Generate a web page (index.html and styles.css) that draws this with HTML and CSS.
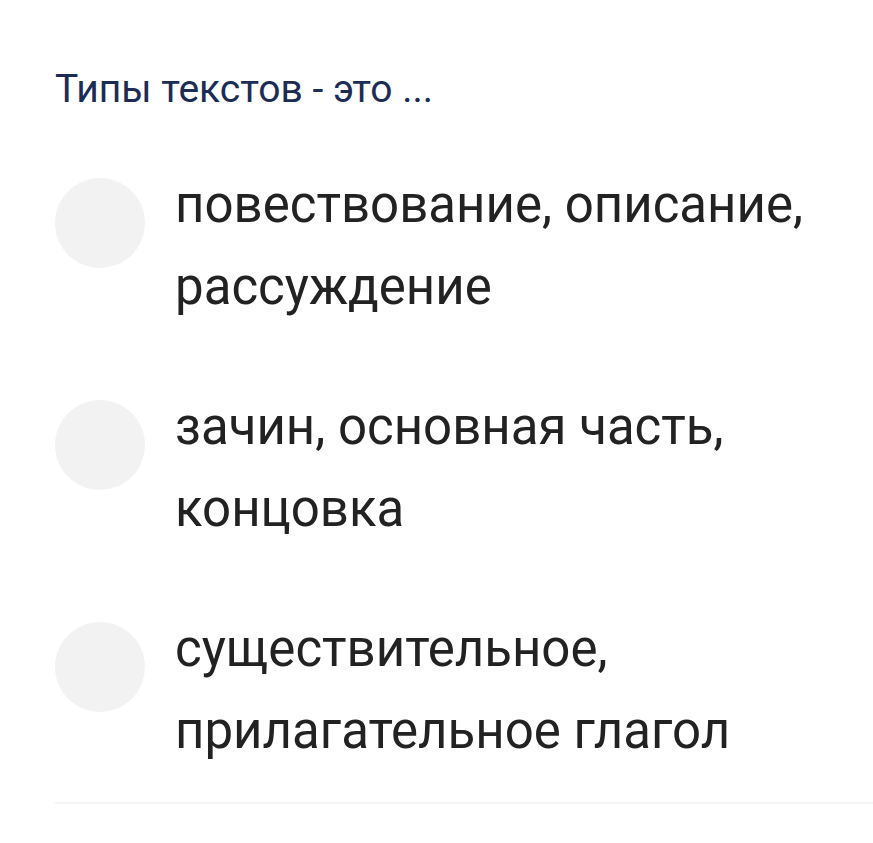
FILE: index.html
```html
<!DOCTYPE html>
<html lang="ru">
<head>
<meta charset="utf-8">
<link rel="stylesheet" href="styles.css">
</head>
<body>
<div class="quiz">
  <div class="question">Типы текстов - это ...</div>
  <div class="options">
    <div class="option"><span class="radio"></span><span class="label">повествование, описание, рассуждение</span></div>
    <div class="option"><span class="radio"></span><span class="label">зачин, основная часть, концовка</span></div>
    <div class="option"><span class="radio"></span><span class="label">существительное, прилагательное глагол</span></div>
  </div>
  <div class="divider"></div>
</div>
</body>
</html>
```
FILE: styles.css
```css
html, body { margin: 0; padding: 0; background: #fff; }
body { font-family: Roboto, "Noto Sans", sans-serif; }
.quiz { padding: 64px 0 0 55px; }
.question { color: #1b2c55; font-size: 39px; line-height: 50px; }
.options { display: flex; flex-direction: column; gap: 58px; margin-top: 50px; }
.option { display: flex; align-items: flex-start; gap: 30px; }
.radio { flex: 0 0 90px; height: 90px; border-radius: 50%; background: #f2f2f2; margin-top: 14px; }
.label { font-size: 51px; line-height: 82px; color: #222; width: 660px; }
.divider { margin-top: 30px; height: 2px; background: #f4f4f4; }
```
